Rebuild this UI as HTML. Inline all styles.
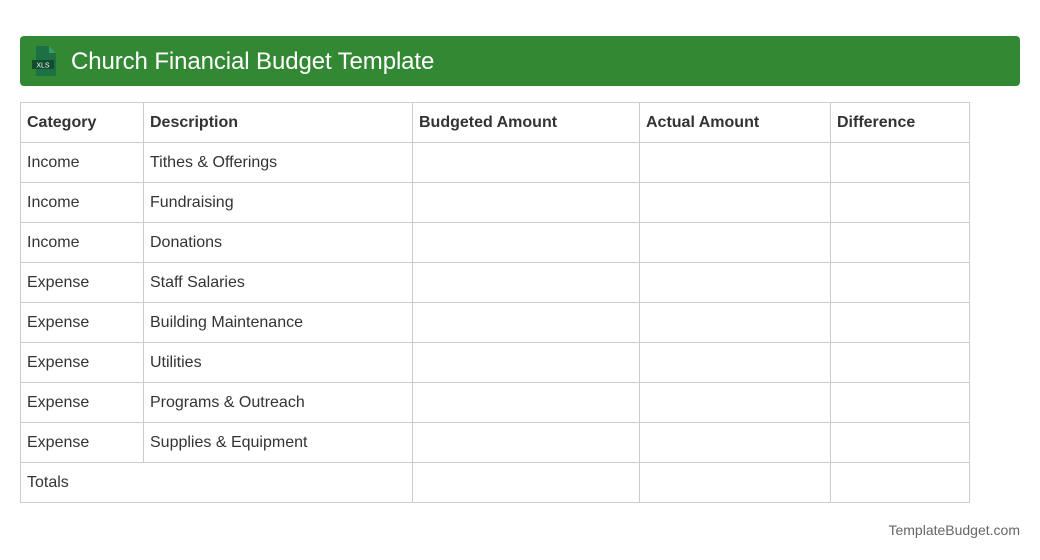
<!DOCTYPE html>
<html><head><style>
body{margin:0;width:1040px;height:560px;background:#fff;font-family:"Liberation Sans",sans-serif;position:relative;overflow:hidden}
.hdr{position:absolute;left:20px;top:36px;width:1000px;height:50px;background:#338833;border-radius:4px}
.hdr .t{position:absolute;left:51px;top:12px;color:#fff;font-size:24px;line-height:28px;letter-spacing:-0.1px}
table{position:absolute;left:20px;top:102px;border-collapse:collapse;width:949px;table-layout:fixed}
td{border:1px solid #ccc;height:39px;padding:1px 0 0 6px;box-sizing:border-box;font-size:16px;color:#333}
tr{height:40px}
tr:first-child td{font-weight:bold}
.ft{position:absolute;right:20px;top:522px;font-size:14px;color:#666}
</style></head><body>
<div class="hdr">
<svg style="position:absolute;left:10px;top:9px" width="30" height="32" viewBox="0 0 30 32">
<path d="M6 1h13l7 7v23H6z" fill="#1d7044"/><path d="M19 1v7h7z" fill="#3a9a63"/>
<rect x="2" y="15" width="22" height="9" fill="#114d2c"/>
<text x="13" y="22.5" font-size="7" fill="#fff" text-anchor="middle" font-family="Liberation Sans">XLS</text>
</svg>
<div class="t">Church Financial Budget Template</div></div>
<table>
<colgroup><col style="width:123px"><col style="width:269px"><col style="width:227px"><col style="width:191px"><col style="width:139px"></colgroup>
<tr><td>Category</td><td>Description</td><td>Budgeted Amount</td><td>Actual Amount</td><td>Difference</td></tr>
<tr><td>Income</td><td>Tithes &amp; Offerings</td><td></td><td></td><td></td></tr>
<tr><td>Income</td><td>Fundraising</td><td></td><td></td><td></td></tr>
<tr><td>Income</td><td>Donations</td><td></td><td></td><td></td></tr>
<tr><td>Expense</td><td>Staff Salaries</td><td></td><td></td><td></td></tr>
<tr><td>Expense</td><td>Building Maintenance</td><td></td><td></td><td></td></tr>
<tr><td>Expense</td><td>Utilities</td><td></td><td></td><td></td></tr>
<tr><td>Expense</td><td>Programs &amp; Outreach</td><td></td><td></td><td></td></tr>
<tr><td>Expense</td><td>Supplies &amp; Equipment</td><td></td><td></td><td></td></tr>
<tr><td colspan="2">Totals</td><td></td><td></td><td></td></tr>
</table>
<div class="ft">TemplateBudget.com</div>
</body></html>
